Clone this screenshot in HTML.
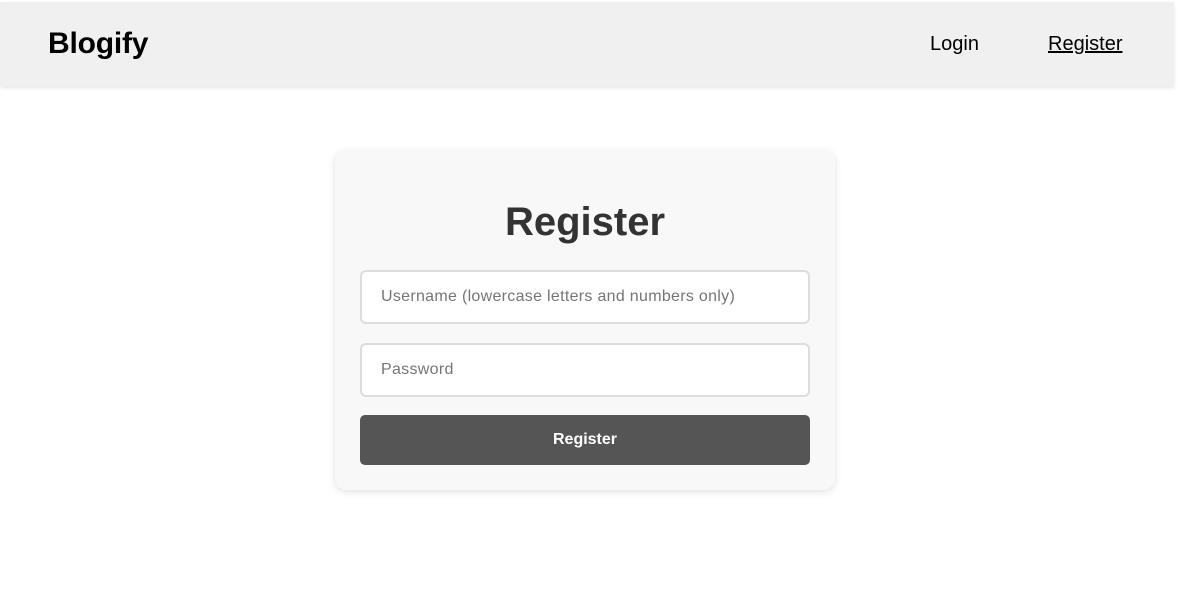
<!DOCTYPE html>
<html><head><style>
body{margin:0;background:#fff;font-family:"Liberation Sans",Arial,sans-serif;width:1182px;height:605px;overflow:hidden;position:relative}
.hdr{position:absolute;left:0;top:2px;width:1174px;height:84px;background:#f0f0f0;box-shadow:0 2px 4px rgba(0,0,0,0.1)}
.logo{position:absolute;left:48px;top:25px;font-size:30px;font-weight:bold;color:#000;letter-spacing:-0.2px}
.nav{position:absolute;top:31px;font-size:20px;color:#000}
.card{position:absolute;left:335px;top:150px;width:500px;height:340px;background:#f8f8f8;border-radius:12px;box-shadow:0 2px 8px rgba(0,0,0,0.12)}
h1{position:absolute;left:0;width:500px;top:50px;margin:0;text-align:center;font-size:40px;color:#333;line-height:44px}
.in{position:absolute;left:25px;width:446px;height:50px;border:2px solid #ddd;border-radius:6px;background:#fff;box-sizing:content-box}
.in span{position:absolute;left:19px;top:16px;font-size:16px;color:#757575;letter-spacing:0.3px}
.btn{position:absolute;left:25px;top:265px;width:450px;height:50px;background:#555;border-radius:5px;color:#fff;font-weight:bold;font-size:16px;text-align:center;line-height:50px}
</style></head><body>
<div class="hdr">
<div class="logo">Blogify</div>
<div class="nav" style="left:930px">Login</div>
<div class="nav" style="left:1048px;text-decoration:underline">Register</div>
</div>
<div class="card">
<h1>Register</h1>
<div class="in" style="top:120px"><span>Username (lowercase letters and numbers only)</span></div>
<div class="in" style="top:193px"><span>Password</span></div>
<div class="btn">Register</div>
</div>
</body></html>
